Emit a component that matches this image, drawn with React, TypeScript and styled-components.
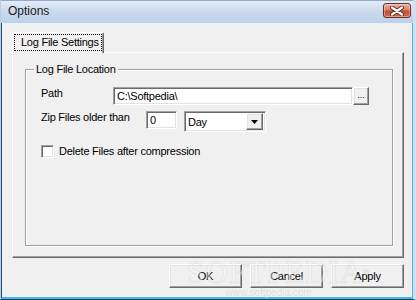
import styled, { createGlobalStyle } from 'styled-components';

const GlobalStyle = createGlobalStyle`
  html, body {
    margin: 0;
    padding: 0;
    background: #f0f0f0;
  }
  * {
    box-sizing: border-box;
  }
`;

const Window = styled.div`
  position: relative;
  width: 416px;
  height: 300px;
  display: flex;
  flex-direction: column;
  background: #f0f0f0;
  border-left: 1px solid #b9cfe8;
  border-right: 3px solid #cfe0f2;
  border-bottom: 1px solid #1f3a5e;
  font-family: 'Liberation Sans', Arial, sans-serif;
  font-size: 11px;
  letter-spacing: -0.25px;
  color: #000;
  overflow: hidden;
`;

const TitleBar = styled.div`
  height: 23px;
  flex: none;
  display: flex;
  align-items: center;
  justify-content: space-between;
  padding: 0 2px 0 7px;
  background: linear-gradient(to bottom, #e4edf7 0%, #cddcee 40%, #bcd1ea 100%);
  border-top: 1px solid #8fa9c8;
`;

const Title = styled.span`
  font-size: 12px;
  letter-spacing: 0;
  color: #1b1b1b;
  margin-top: -2px;
`;

const CloseButton = styled.div`
  width: 28px;
  height: 15px;
  margin-top: -3px;
  border: 1px solid #6b2d22;
  border-radius: 3px;
  display: flex;
  align-items: center;
  justify-content: center;
  background: linear-gradient(to bottom, #eab3a5 0%, #d97a64 48%, #c24a33 52%, #d46c52 100%);
  box-shadow: inset 0 0 0 1px rgba(255, 255, 255, 0.35);
`;

const Client = styled.div`
  flex: 1;
  display: flex;
  flex-direction: column;
  padding: 9px 8px 0 10px;
  border-left: 1px solid #27476f;
  border-right: 1px solid #3cbde8;
  border-bottom: 2px solid #3cbde8;
`;

const TabStrip = styled.div`
  display: flex;
  height: 20px;
`;

const Tab = styled.div`
  position: relative;
  z-index: 1;
  width: 92px;
  height: 21px;
  padding: 1px 1px 2px 1px;
  background: #f0f0f0;
  border-top: 1px solid #ffffff;
  border-left: 1px solid #ffffff;
  border-right: 1px solid #696969;
  border-top-left-radius: 2px;
  border-top-right-radius: 2px;
  box-shadow: inset -1px 0 0 #a0a0a0;
`;

const TabFocus = styled.div`
  height: 17px;
  width: 88px;
  outline: 1px dotted #000;
  outline-offset: -1px;
  display: flex;
  align-items: center;
  padding-left: 7px;
  line-height: 13px;
`;

const TabPanel = styled.div`
  height: 206px;
  padding: 16px 10px 10px 12px;
  border-top: 1px solid #ffffff;
  border-left: 1px solid #ffffff;
  border-right: 1px solid #696969;
  border-bottom: 1px solid #696969;
  box-shadow: inset -1px -1px 0 #a0a0a0;
`;

const GroupBox = styled.div`
  position: relative;
  height: 177px;
  padding: 17px 0 0 15px;
  border: 1px solid #a0a0a0;
  box-shadow: 1px 1px 0 #ffffff, inset 1px 1px 0 #ffffff;
`;

const Legend = styled.span`
  position: absolute;
  top: -7px;
  left: 8px;
  padding: 0 2px;
  background: #f0f0f0;
  line-height: 13px;
`;

const Row = styled.div<{ $gap?: number }>`
  display: flex;
  align-items: flex-start;
  margin-top: ${(p) => p.$gap ?? 0}px;
`;

const Label = styled.span<{ $width?: number }>`
  width: ${(p) => (p.$width ? `${p.$width}px` : 'auto')};
  flex: none;
  line-height: 13px;
`;

const sunken = `
  background: #ffffff;
  border-top: 1px solid #a0a0a0;
  border-left: 1px solid #a0a0a0;
  border-bottom: 1px solid #ffffff;
  border-right: 1px solid #ffffff;
  box-shadow: inset 1px 1px 0 #696969, inset -1px -1px 0 #e3e3e3;
`;

const raised = `
  background: #f0f0f0;
  border-top: 1px solid #ffffff;
  border-left: 1px solid #ffffff;
  border-bottom: 1px solid #696969;
  border-right: 1px solid #696969;
  box-shadow: inset -1px -1px 0 #a0a0a0, inset 1px 1px 0 #e3e3e3;
`;

const TextField = styled.div<{ $width: number; $height?: number }>`
  ${sunken}
  width: ${(p) => p.$width}px;
  height: ${(p) => p.$height ?? 18}px;
  padding: 1px 3px;
  line-height: 14px;
  white-space: nowrap;
`;

const BrowseButton = styled.div`
  ${raised}
  width: 16px;
  height: 18px;
  display: flex;
  align-items: center;
  justify-content: center;
  font-size: 9px;
  letter-spacing: 0;
  padding-bottom: 3px;
`;

const Select = styled.div`
  ${sunken}
  width: 82px;
  height: 21px;
  margin-left: 7px;
  display: flex;
  align-items: center;
  justify-content: space-between;
  padding: 2px 2px 2px 3px;
`;

const DropButton = styled.div`
  ${raised}
  width: 17px;
  height: 17px;
  display: flex;
  align-items: center;
  justify-content: center;
`;

const CheckBox = styled.div`
  ${sunken}
  width: 13px;
  height: 13px;
  margin-right: 5px;
  flex: none;
`;

const ButtonBar = styled.div`
  display: flex;
  justify-content: flex-end;
  gap: 8px;
  margin-top: 6px;
`;

const PushButton = styled.div`
  ${raised}
  width: 73px;
  height: 24px;
  display: flex;
  align-items: center;
  justify-content: center;
  padding-bottom: 1px;
`;

/* faint site watermark laid over the button row */
const Watermark = styled.div`
  position: absolute;
  left: 186px;
  top: 258px;
  display: flex;
  flex-direction: column;
  align-items: center;
  pointer-events: none;
  letter-spacing: 0;
`;

const WatermarkLogo = styled.span`
  font-family: 'Liberation Serif', 'Times New Roman', serif;
  font-size: 31px;
  line-height: 30px;
  letter-spacing: 1px;
  color: rgba(255, 255, 255, 0.4);
  -webkit-text-stroke: 1px rgba(205, 205, 205, 0.35);
  sup {
    font-size: 8px;
    vertical-align: top;
  }
`;

const WatermarkUrl = styled.span`
  font-size: 10px;
  line-height: 10px;
  color: rgba(205, 205, 205, 0.7);
  text-shadow: 0 0 1px #fff;
  margin-left: -20px;
`;

function CloseGlyph() {
  return (
    <svg width="14" height="10" viewBox="0 0 14 10">
      <path d="M2 1.5 L12 8.5 M12 1.5 L2 8.5" stroke="#5a2a20" strokeWidth="4" strokeLinecap="round" />
      <path d="M2 1.5 L12 8.5 M12 1.5 L2 8.5" stroke="#ffffff" strokeWidth="2.2" strokeLinecap="round" />
    </svg>
  );
}

function DownArrow() {
  return (
    <svg width="7" height="4" viewBox="0 0 7 4">
      <path d="M0 0 H7 L3.5 4 Z" fill="#000" />
    </svg>
  );
}

export default function App() {
  return (
    <>
      <GlobalStyle />
      <Window>
        <TitleBar>
          <Title>Options</Title>
          <CloseButton>
            <CloseGlyph />
          </CloseButton>
        </TitleBar>
        <Client>
          <TabStrip>
            <Tab>
              <TabFocus>Log File Settings</TabFocus>
            </Tab>
          </TabStrip>
          <TabPanel>
            <GroupBox>
              <Legend>Log File Location</Legend>
              <Row>
                <Label $width={72}>Path</Label>
                <TextField $width={240}>C:\Softpedia\</TextField>
                <BrowseButton>...</BrowseButton>
              </Row>
              <Row $gap={6}>
                <Label $width={105}>Zip Files older than</Label>
                <TextField $width={31}>0</TextField>
                <Select>
                  <span>Day</span>
                  <DropButton>
                    <DownArrow />
                  </DropButton>
                </Select>
              </Row>
              <Row $gap={13}>
                <CheckBox />
                <Label>Delete Files after compression</Label>
              </Row>
            </GroupBox>
          </TabPanel>
          <ButtonBar>
            <PushButton>OK</PushButton>
            <PushButton>Cancel</PushButton>
            <PushButton>Apply</PushButton>
          </ButtonBar>
        </Client>
        <Watermark>
          <WatermarkLogo>
            SOFTPEDIA<sup>®</sup>
          </WatermarkLogo>
          <WatermarkUrl>www.softpedia.com</WatermarkUrl>
        </Watermark>
      </Window>
    </>
  );
}
